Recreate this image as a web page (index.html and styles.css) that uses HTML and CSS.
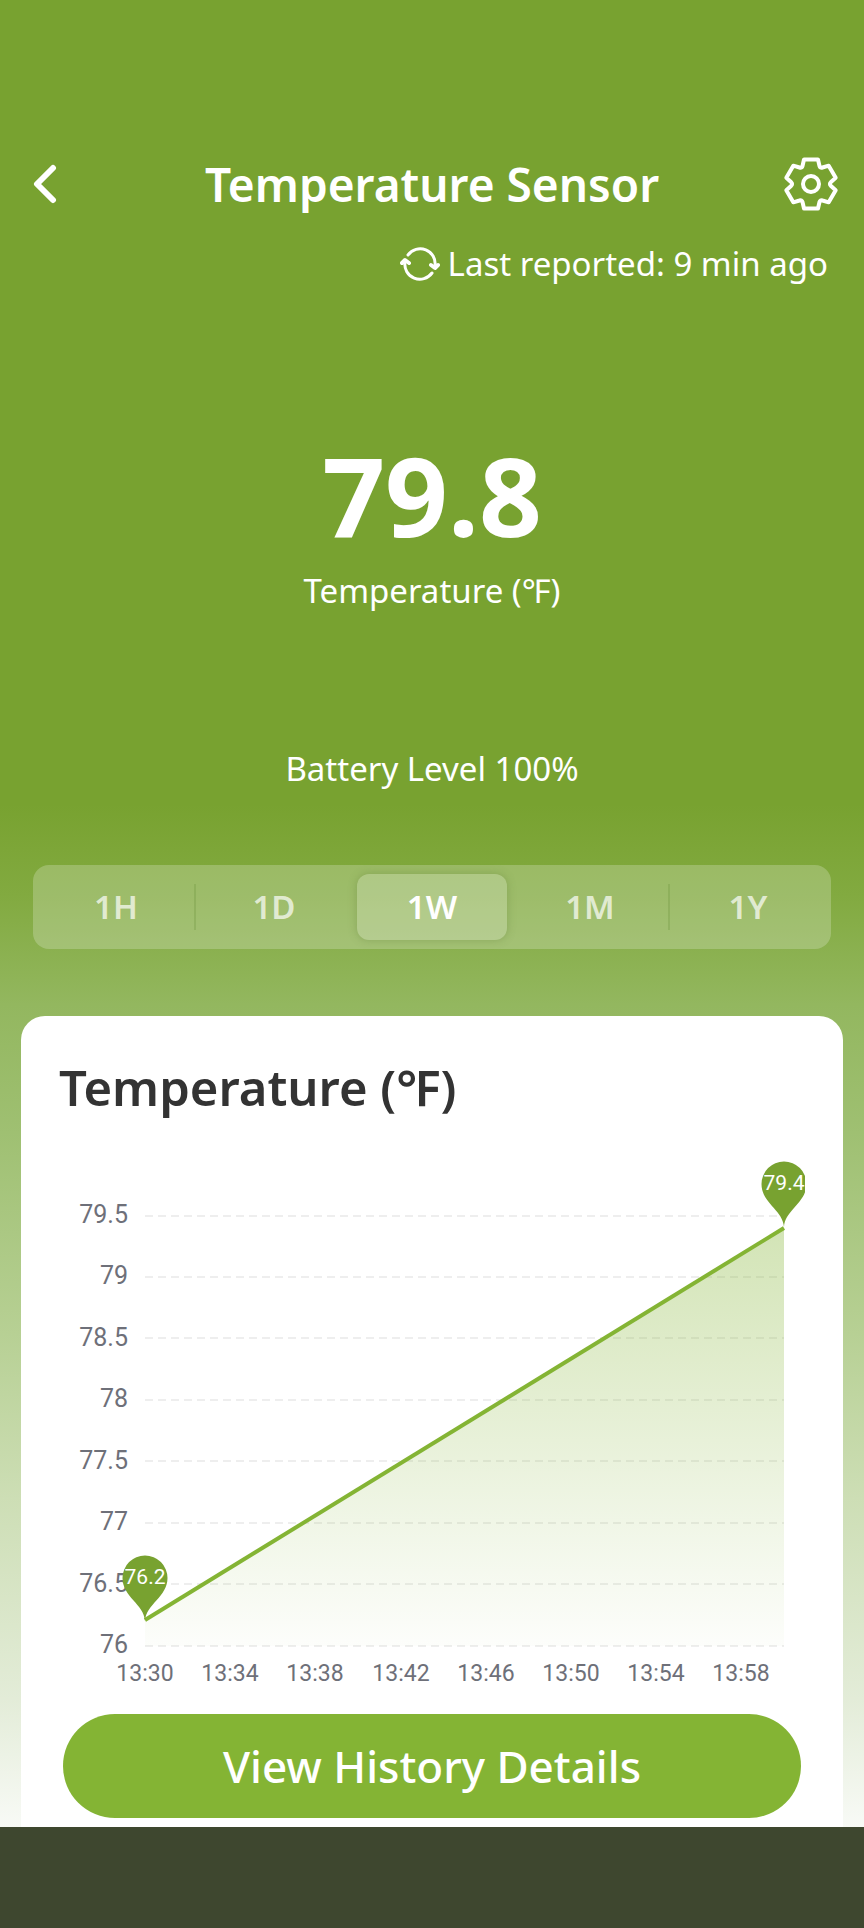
FILE: index.html
```html
<!DOCTYPE html>
<html lang="en">
<head>
<meta charset="utf-8">
<meta name="viewport" content="width=device-width, initial-scale=1">
<title>Temperature Sensor</title>
<link rel="stylesheet" href="styles.css">
</head>
<body>

<main class="screen">
  <header class="header">
    <button class="icon-button" type="button" aria-label="Back">
      <svg class="back" viewBox="0 0 26 40"><path d="M20 4 L4 20 L20 36"/></svg>
    </button>
    <h1>Temperature Sensor</h1>
    <button class="icon-button" type="button" aria-label="Settings">
      <svg class="gear" viewBox="-28 -28 56 56">
        <path d="M-7 -24.5 L7 -24.5 L8.5 -18 Q9 -15.6 11.5 -16.5 L17.7 -18.3 L24.7 -6.2 L20 -2 Q17.8 0 20 2 L24.7 6.2 L17.7 18.3 L11.5 16.5 Q9 15.6 8.5 18 L7 24.5 L-7 24.5 L-8.5 18 Q-9 15.6 -11.5 16.5 L-17.7 18.3 L-24.7 6.2 L-20 2 Q-17.8 0 -20 -2 L-24.7 -6.2 L-17.7 -18.3 L-11.5 -16.5 Q-9 -15.6 -8.5 -18 Z"/>
        <circle r="8"/>
      </svg>
    </button>
  </header>

  <div class="reported">
    <svg class="refresh" viewBox="0 0 40 34">
      <path d="M8 8 A15 15 0 0 1 35 19 M5 15 A15 15 0 0 0 32 26"/>
      <path class="arrow" d="M2 16 L5 13 L9 16 M31 18 L35 21 L38 18"/>
    </svg>
    <span>Last reported: 9 min ago</span>
  </div>

  <section class="reading">
    <div class="value">79.8</div>
    <div class="label">Temperature (℉)</div>
    <div class="battery">Battery Level 100%</div>
  </section>

  <div class="range" role="group" aria-label="Time range">
    <button type="button">1H</button>
    <button type="button" class="divided">1D</button>
    <button type="button" class="active" aria-pressed="true">1W</button>
    <button type="button">1M</button>
    <button type="button" class="divided">1Y</button>
  </div>

  <section class="card">
    <h2>Temperature (℉)</h2>
    <svg class="chart" viewBox="0 0 746 581" role="img" aria-label="Temperature by time">
      <defs>
        <linearGradient id="area" x1="0" y1="0" x2="0" y2="1">
          <stop offset="0" stop-color="#84b434" stop-opacity="0.36"/>
          <stop offset="1" stop-color="#84b434" stop-opacity="0.02"/>
        </linearGradient>
      </defs>
      <g class="grid">
        <path d="M86 97H725M86 158H725M86 219H725M86 281H725M86 342H725M86 404H725M86 465H725M86 527H725"/>
      </g>
      <path fill="url(#area)" d="M86 501 L725 109 V527 H86 Z"/>
      <path class="line" d="M86 501 L725 109"/>
      <g class="y-axis">
        <text x="69" y="104">79.5</text>
        <text x="69" y="165">79</text>
        <text x="69" y="227">78.5</text>
        <text x="69" y="288">78</text>
        <text x="69" y="350">77.5</text>
        <text x="69" y="411">77</text>
        <text x="69" y="473">76.5</text>
        <text x="69" y="534">76</text>
      </g>
      <g class="x-axis">
        <text x="86" y="562">13:30</text>
        <text x="171" y="562">13:34</text>
        <text x="256" y="562">13:38</text>
        <text x="342" y="562">13:42</text>
        <text x="427" y="562">13:46</text>
        <text x="512" y="562">13:50</text>
        <text x="597" y="562">13:54</text>
        <text x="682" y="562">13:58</text>
      </g>
      <g class="pin" transform="translate(86 502)">
        <path d="M0 0 C-1 -17 -22.500 -24 -22.500 -43 A22.500 22.500 0 0 1 22.500 -43 C22.500 -24 1 -17 0 0 Z"/>
        <text x="0" y="-37">76.2</text>
      </g>
      <g class="pin" transform="translate(725 108)">
        <path d="M0 0 C-1 -17 -22.500 -24 -22.500 -43 A22.500 22.500 0 0 1 22.500 -43 C22.500 -24 1 -17 0 0 Z"/>
        <text x="0" y="-37">79.4</text>
      </g>
    </svg>
    <button class="history" type="button">View History Details</button>
  </section>
</main>

<div class="navbar"></div>

</body>
</html>
```
FILE: styles.css
```css
*{
  box-sizing:border-box;
}
body{
  margin:0;
  min-height:100vh;
  display:flex;
  flex-direction:column;

  font-family:"Noto Sans", sans-serif;
  font-size:33px;
  line-height:48px;
  color:#fff;
  background:#3e472f;
}
button{
  margin:0;
  padding:0;
  border:0;
  background:none;
  font:inherit;
  color:inherit;
  cursor:pointer;
}
svg{
  display:block;
  fill:none;
  stroke-linecap:round;
  stroke-linejoin:round;
}

.screen{
  flex:1;
  padding-top:152px;
  background:linear-gradient(#78a230 44%, #82aa40 49%, #93b75f 55%, #9fc072 62%, #b7d094 73%, #cddeb5 82%, #e3ecd8 93%, #f8faf6 100%);
}

.header{
  display:flex;
  align-items:center;
  justify-content:space-between;
  padding:0 25px;
}
.header h1{
  margin:0;
  font-size:46px;
  line-height:64px;
  font-weight:600;
}
.icon-button{
  width:56px;
  height:64px;
  display:flex;
  align-items:center;
}
.icon-button svg,
.refresh{
  stroke:#fff;
}
.back{
  width:26px;
  height:40px;
  margin-left:8px;
  stroke-width:6px;
}
.gear{
  width:56px;
  height:56px;
  stroke-width:4px;
}

.reported{
  display:flex;
  align-items:center;
  justify-content:flex-end;
  gap:8px;
  margin-top:24px;
  padding-right:36px;
}
.refresh{
  width:40px;
  height:34px;
  stroke-width:3px;
}
.refresh .arrow{
  stroke-width:4px;
}

.reading{
  margin-top:146px;
  text-align:center;
}
.value{
  font-size:110px;
  line-height:120px;
  font-weight:700;
}
.label{
  margin-top:13px;
}
.battery{
  margin-top:130px;
}

.range{
  display:flex;
  height:84px;
  margin:72px 33px 67px;
  padding:9px 4px;
  border-radius:16px;
  background:rgba(255,255,255,0.22);
}
.range button{
  flex:1;
  margin:0 4px;
  position:relative;
  border-radius:12px;
  font-weight:600;
  color:rgba(255,255,255,0.7);
}
.range .active{
  color:#fff;
  background:rgba(255,255,255,0.2);
  box-shadow:0 0 8px rgba(90,120,50,0.35);
}
.range .divided::before{
  content:"";
  position:absolute;
  left:-5px;
  top:10px;
  bottom:10px;
  width:2px;
  background:rgba(100,140,50,0.25);
}

.card{
  margin:0 21px;
  padding:39px 38px 9px;
  border-radius:24px 24px 0 0;
  background:#fff;
}
.card h2{
  margin:0;
  font-size:49px;
  line-height:64px;
  font-weight:600;
  color:#333;
}

.chart{
  width:100%;
  font-family:Roboto, sans-serif;
}
.grid{
  stroke:#eee;
  stroke-width:2px;
  stroke-linecap:butt;
  stroke-dasharray:8 5;
}
.line{
  stroke:#84b434;
  stroke-width:4px;
  stroke-linecap:butt;
}
.y-axis,
.x-axis{
  fill:#6e7079;
}
.y-axis{
  font-size:25px;
  text-anchor:end;
}
.x-axis{
  font-size:23px;
  text-anchor:middle;
}
.pin{
  fill:#78a230;
}
.pin text{
  font-size:21px;
  text-anchor:middle;
  fill:#fff;
}

.history{
  display:block;
  width:calc(100% - 8px);
  height:104px;
  margin:14px 4px 0;
  border-radius:52px;
  font-size:44px;
  font-weight:500;
  background:#84b434;
}

.navbar{
  height:102px;
  background:#3e472f;
}
```
